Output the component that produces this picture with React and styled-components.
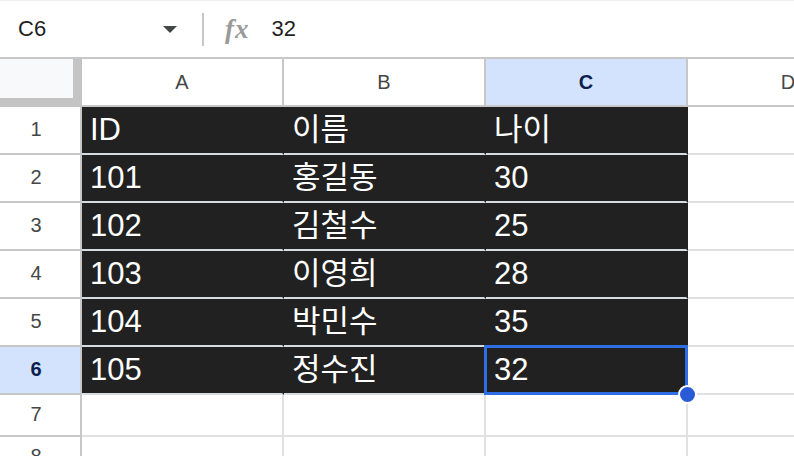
import React from "react";
import styled, { createGlobalStyle, css } from "styled-components";

const Global = createGlobalStyle`
  html, body { margin: 0; padding: 0; background: #ffffff; overflow: hidden; }
  body { font-family: "Liberation Sans", "Noto Sans CJK KR", Arial, sans-serif; }
  * { box-sizing: border-box; }
`;

const Page = styled.div`
  width: 794px;
  height: 456px;
  overflow: hidden;
  background: #ffffff;
`;

const Toolbar = styled.div`
  display: flex;
  align-items: center;
  height: 59px;
  border-top: 1px solid #efefef;
  border-bottom: 2px solid #c7c7c7;
`;

const NameBox = styled.div`
  display: flex;
  align-items: center;
  justify-content: space-between;
  width: 190px;
  padding: 0 13px 0 18px;
  font-family: "Liberation Sans", Arial, sans-serif;
  font-size: 22px;
  color: #1f1f1f;
`;

const Caret = styled.span`
  width: 0;
  height: 0;
  border-left: 7px solid transparent;
  border-right: 7px solid transparent;
  border-top: 7px solid #444746;
`;

const Divider = styled.span`
  width: 2px;
  height: 33px;
  margin-left: 12px;
  background: #c7c7c7;
`;

const Fx = styled.span`
  margin-left: 21px;
  font-family: "Liberation Serif", "DejaVu Serif", serif;
  font-style: italic;
  font-weight: 700;
  font-size: 27px;
  letter-spacing: 1px;
  color: #9a9a9a;
`;

const Formula = styled.span`
  margin-left: 22px;
  font-family: "Liberation Sans", Arial, sans-serif;
  font-size: 22px;
  color: #1f1f1f;
`;

const Row = styled.div`
  display: grid;
  grid-template-columns: 82px 202px 202px 202px 202px;
  height: ${(p) => p.$h}px;
`;

const Corner = styled.div`
  background: #c4c4c4;
  padding: 0 9px 8px 0;
  border-bottom: 1px solid #c4c4c4;
  &::before {
    content: "";
    display: block;
    height: 100%;
    background: #f8f9fa;
  }
`;

const ColHead = styled.div`
  display: flex;
  align-items: center;
  justify-content: center;
  border-right: 2px solid #c7c7c7;
  border-bottom: 2px solid #c7c7c7;
  font-family: "Liberation Sans", Arial, sans-serif;
  font-size: 20px;
  color: #444746;
  ${(p) =>
    p.$active &&
    css`
      background: #d3e3fd;
      color: #0b1f4f;
      font-weight: 700;
    `}
`;

const RowHead = styled.div`
  display: flex;
  align-items: center;
  justify-content: center;
  border-right: 2px solid #c7c7c7;
  border-bottom: 2px solid #c7c7c7;
  font-family: "Liberation Sans", Arial, sans-serif;
  font-size: 20px;
  color: #444746;
  padding: 0 8px 2px 0;
  ${(p) =>
    p.$active &&
    css`
      background: #d3e3fd;
      color: #0b1f4f;
      font-weight: 700;
    `}
`;

const Cell = styled.div`
  position: relative;
  display: flex;
  align-items: center;
  padding: 0 8px;
  border-right: 2px solid #e1e1e1;
  border-bottom: 2px solid #e1e1e1;
  font-family: "Liberation Sans", "Noto Sans CJK KR", Arial, sans-serif;
  font-size: 31px;
  line-height: 36px;
  color: #ffffff;
  white-space: nowrap;
  ${(p) =>
    p.$dark &&
    css`
      background: #212121;
      border-right-color: #212121;
      border-bottom-color: #d9dcdf;
    `}
  ${(p) =>
    p.$selected &&
    css`
      &::after {
        content: "";
        position: absolute;
        left: -2px;
        top: -2px;
        right: -2px;
        bottom: -2px;
        border: 3px solid #2f6fe4;
        pointer-events: none;
      }
    `}
`;

const Handle = styled.span`
  position: absolute;
  right: -11px;
  bottom: -11px;
  width: 19px;
  height: 19px;
  border-radius: 50%;
  background: #2a5bd7;
  border: 2px solid #ffffff;
  z-index: 2;
`;

const data = [
  ["ID", "이름", "나이"],
  ["101", "홍길동", "30"],
  ["102", "김철수", "25"],
  ["103", "이영희", "28"],
  ["104", "박민수", "35"],
  ["105", "정수진", "32"],
];

export default function App() {
  return (
    <Page>
      <Global />
      <Toolbar>
        <NameBox>
          <span>C6</span>
          <Caret />
        </NameBox>
        <Divider />
        <Fx>fx</Fx>
        <Formula>32</Formula>
      </Toolbar>
      <Row $h={48}>
        <Corner />
        <ColHead>A</ColHead>
        <ColHead>B</ColHead>
        <ColHead $active>C</ColHead>
        <ColHead>D</ColHead>
      </Row>
      {data.map((r, i) => (
        <Row $h={48} key={i}>
          <RowHead $active={i === 5}>{i + 1}</RowHead>
          {r.map((v, j) => (
            <Cell $dark key={j} $selected={i === 5 && j === 2}>
              {v}
              {i === 5 && j === 2 && <Handle />}
            </Cell>
          ))}
          <Cell />
        </Row>
      ))}
      {[7, 8].map((n) => (
        <Row $h={42} key={n}>
          <RowHead>{n}</RowHead>
          <Cell />
          <Cell />
          <Cell />
          <Cell />
        </Row>
      ))}
    </Page>
  );
}
